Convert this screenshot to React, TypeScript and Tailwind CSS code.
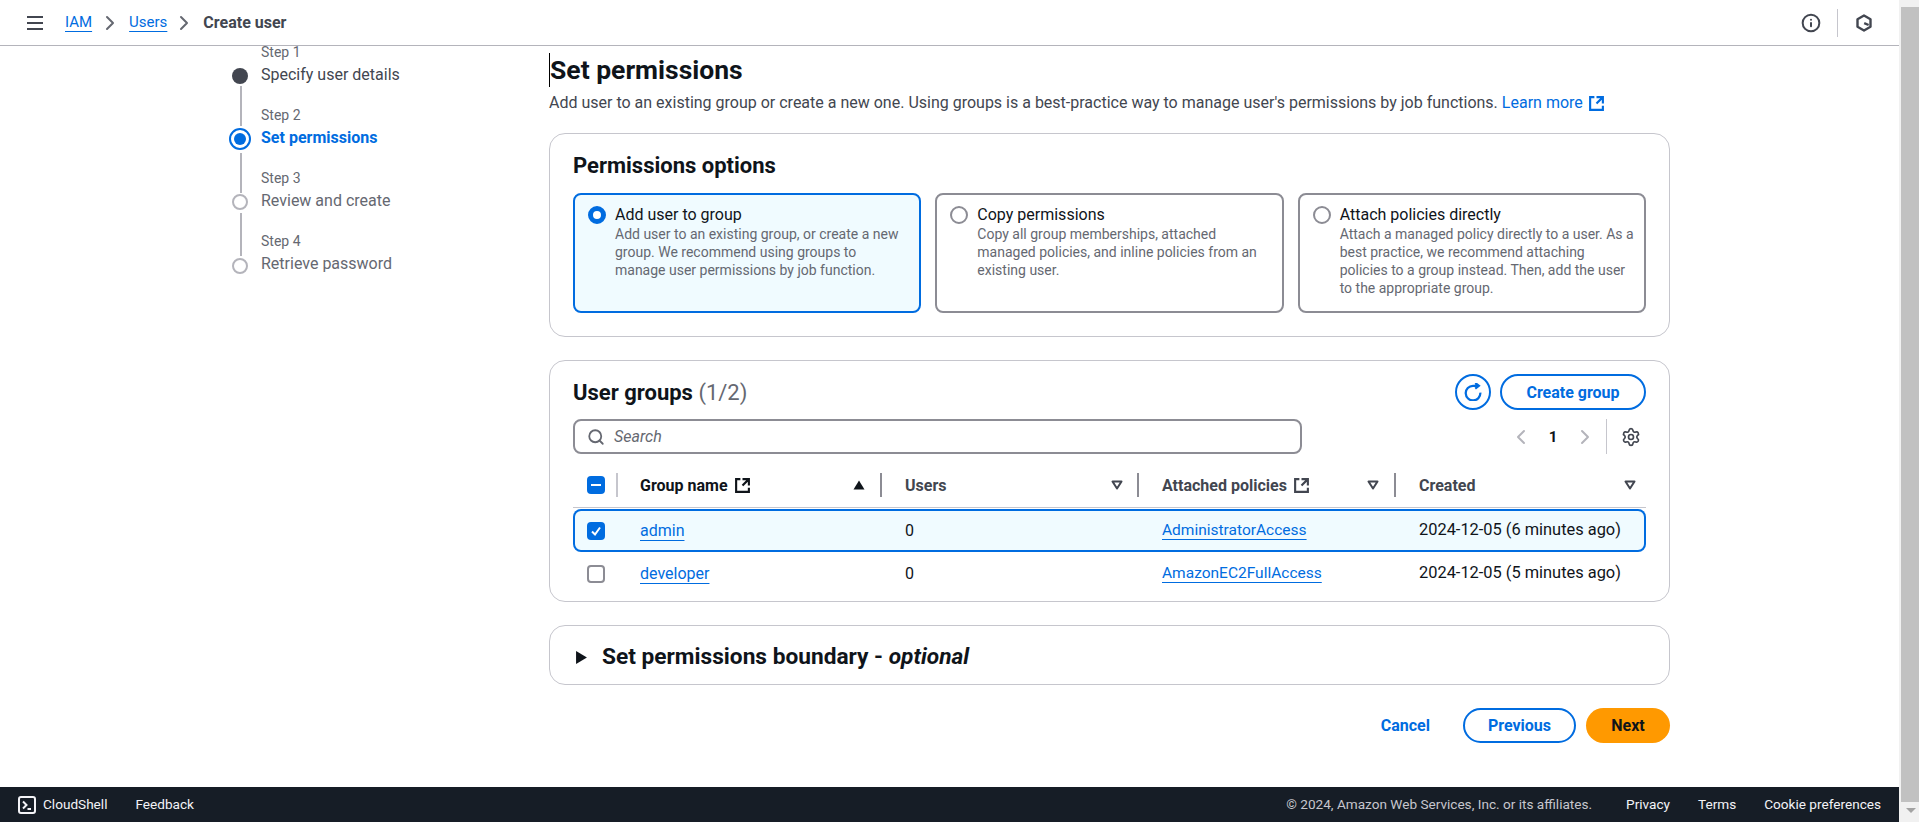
import { ChevronLeft, ChevronRight, Info, Search, Settings } from "lucide-react";

type CardProps = {
  title: string;
  description: string;
  selected?: boolean;
};

const cards: CardProps[] = [
  {
    title: "Add user to group",
    description:
      "Add user to an existing group, or create a new group. We recommend using groups to manage user permissions by job function.",
    selected: true,
  },
  {
    title: "Copy permissions",
    description:
      "Copy all group memberships, attached managed policies, and inline policies from an existing user.",
  },
  {
    title: "Attach policies directly",
    description:
      "Attach a managed policy directly to a user. As a best practice, we recommend attaching policies to a group instead. Then, add the user to the appropriate group.",
  },
];

const steps = [
  { label: "Step 1", title: "Specify user details", cls: "text-[#424650]" },
  { label: "Step 2", title: "Set permissions", cls: "font-bold text-[#006ce0]" },
  { label: "Step 3", title: "Review and create", cls: "text-[#656871]" },
  { label: "Step 4", title: "Retrieve password", cls: "text-[#656871]" },
];

const rows = [
  { name: "admin", policy: "AdministratorAccess", created: "2024-12-05 (6 minutes ago)", selected: true },
  { name: "developer", policy: "AmazonEC2FullAccess", created: "2024-12-05 (5 minutes ago)", selected: false },
];

const tableCols = "grid grid-cols-[67px_265px_257px_257px_227px]";

function ExternalIcon({ className }: { className: string }) {
  return (
    <svg viewBox="0 0 16 16" fill="none" stroke="currentColor" strokeWidth="2" className={className}>
      <path d="M14 8V2H8M14 2 8 8M6 2H2v12h12v-4" />
    </svg>
  );
}

function SortIcon({ active }: { active?: boolean }) {
  return (
    <svg viewBox="0 0 12 10" className="block h-[10px] w-[12px] text-[#424650]">
      {active ? (
        <path d="M6 0.5 11.5 9.5H0.5Z" fill="#0f141a" />
      ) : (
        <path d="M1.5 1.5h9L6 8.5Z" fill="none" stroke="currentColor" strokeWidth="2" strokeLinejoin="round" />
      )}
    </svg>
  );
}

function HeaderCell({
  label,
  external,
  active,
  divider = true,
  sortClass,
}: {
  label: string;
  external?: boolean;
  active?: boolean;
  divider?: boolean;
  sortClass: string;
}) {
  return (
    <div className="flex h-[24px] items-center pr-[23px] last:pr-[10px]">
      <span className={`pt-px text-[16px] font-bold ${active ? "text-[#0f141a]" : "text-[#424650]"}`}>{label}</span>
      {external && (
        <ExternalIcon className={`ml-[6px] h-[17px] w-[17px] ${active ? "text-[#0f141a]" : "text-[#424650]"}`} />
      )}
      <span className={`ml-auto ${sortClass}`}>
        <SortIcon active={active} />
      </span>
      {divider && <span className="h-[24px] w-[2px] bg-[#8c8c94]" />}
    </div>
  );
}

function Panel({ className, children }: { className: string; children: React.ReactNode }) {
  return <section className={`rounded-[16px] border border-[#c6c6cd] bg-white ${className}`}>{children}</section>;
}

function OptionCard({ title, description, selected }: CardProps) {
  return (
    <div
      className={`flex h-[120px] gap-[9px] rounded-lg border-2 pl-[13px] pr-[10px] pt-[10px] ${
        selected ? "border-[#006ce0] bg-[#f0fbff]" : "border-[#8c8c94] bg-white"
      }`}
    >
      {selected ? (
        <span className="mt-px h-[18px] w-[18px] shrink-0 rounded-full border-[5px] border-[#006ce0] bg-white" />
      ) : (
        <span className="mt-px h-[18px] w-[18px] shrink-0 rounded-full border-2 border-[#8c8c94] bg-white" />
      )}
      <div>
        <div className="text-[16px] leading-[20px] text-[#0f141a]">{title}</div>
        <p className="text-[14px] leading-[18px] text-[#656871]">{description}</p>
      </div>
    </div>
  );
}

function StepRail() {
  return (
    <div className="flex w-[22px] flex-col items-center pt-[22px]">
      <div className="h-[16px] w-[16px] rounded-full bg-[#424650]" />
      <div className="ml-px mt-[2px] h-[40px] w-[2px] bg-[#b4b4bb]" />
      <div className="mt-[2px] flex h-[22px] w-[22px] items-center justify-center rounded-full border-2 border-[#006ce0]">
        <div className="h-[12px] w-[12px] rounded-full bg-[#006ce0]" />
      </div>
      <div className="ml-px mt-[3px] h-[40px] w-[2px] bg-[#b4b4bb]" />
      <div className="mt-px h-[16px] w-[16px] rounded-full border-2 border-[#b4b4bb]" />
      <div className="ml-px mt-[3px] h-[43px] w-[2px] bg-[#b4b4bb]" />
      <div className="mt-[2px] h-[16px] w-[16px] rounded-full border-2 border-[#b4b4bb]" />
    </div>
  );
}

export default function App() {
  return (
    <div className="flex h-screen overflow-hidden bg-white font-['Roboto',sans-serif] text-[16px] text-[#0f141a]">
      <div className="flex min-w-0 flex-1 flex-col">
        <header className="flex h-[46px] shrink-0 items-center border-b border-[#b4b4bb] pl-[27px] pr-[26px]">
          <svg viewBox="0 0 16 14" className="h-[14px] w-[16px] text-[#424650]" fill="none" stroke="currentColor" strokeWidth="2">
            <path d="M0 1h16M0 7h16M0 13h16" />
          </svg>
          <a className="ml-[22px] text-[15px] text-[#006ce0] underline underline-offset-4">IAM</a>
          <ChevronRight className="ml-[6px] h-[24px] w-[24px] text-[#656871]" />
          <a className="ml-[7px] text-[15px] text-[#006ce0] underline underline-offset-4">Users</a>
          <ChevronRight className="ml-[5px] h-[24px] w-[24px] text-[#656871]" />
          <span className="ml-[7px] font-bold text-[#424650]">Create user</span>
          <Info className="ml-auto h-[20px] w-[20px] text-[#424650]" strokeWidth={2.4} />
          <span className="ml-[16px] mr-[17px] h-[28px] w-px bg-[#c6c6cd]" />
          <svg viewBox="0 0 18 18" className="h-[18px] w-[18px]">
            <path d="M9 1.5 15.5 5.2v7.6L9 16.5 2.5 12.8V5.2Z" fill="white" stroke="#424650" strokeWidth="2.4" strokeLinejoin="round" />
            <path d="M9.2 9.2 13.6 11" stroke="#424650" strokeWidth="2.4" />
          </svg>
        </header>

        <div className="flex min-h-0 flex-1 pl-[229px]">
          <StepRail />
          <nav className="ml-[10px] w-[288px] shrink-0">
            {steps.map((step) => (
              <div key={step.label} className="h-[63px]">
                <div className="text-[14px] leading-[12px] text-[#656871]">{step.label}</div>
                <div className={`mt-[6px] leading-[22px] ${step.cls}`}>{step.title}</div>
              </div>
            ))}
          </nav>

          <main className="w-[1121px] shrink-0">
            <h1 className="mt-[7px] border-l border-black text-[26.5px] font-bold leading-[34px] text-[#0f141a]">
              Set permissions
            </h1>
            <p className="mt-[6px] flex items-center leading-[20px] text-[#424650]">
              Add user to an existing group or create a new one. Using groups is a best-practice way to manage user's
              permissions by job functions.
              <a className="ml-[4px] text-[#006ce0]">Learn more</a>
              <ExternalIcon className="ml-[5px] h-[17px] w-[17px] text-[#006ce0]" />
            </p>

            <Panel className="mt-[20px] h-[204px] px-[23px] pt-[20px]">
              <h2 className="text-[22px] font-bold leading-[24px]">Permissions options</h2>
              <div className="mt-[15px] grid grid-cols-3 gap-[14px]">
                {cards.map((card) => (
                  <OptionCard key={card.title} {...card} />
                ))}
              </div>
            </Panel>

            <Panel className="mt-[23px] h-[242px] px-[23px] pt-[13px]">
              <div className="flex h-[36px] items-center">
                <h2 className="pt-[2px] text-[22px] font-bold leading-[24px]">
                  User groups <span className="font-normal text-[#656871]">(1/2)</span>
                </h2>
                <button className="ml-auto flex h-[36px] w-[36px] items-center justify-center rounded-full border-2 border-[#006ce0] text-[#006ce0]">
                  <svg viewBox="0 0 16 16" fill="none" stroke="currentColor" strokeWidth="2" className="h-[18px] w-[18px]">
                    <path d="M14.5 8.5a6.5 6.5 0 1 1-6.5-6h5M10 0l3.2 2.5L10 5" />
                  </svg>
                </button>
                <button className="ml-[9px] h-[36px] w-[146px] rounded-full border-2 border-[#006ce0] pt-px text-[16px] font-bold text-[#006ce0]">
                  Create group
                </button>
              </div>

              <div className="mt-[9px] flex items-center">
                <div className="flex h-[35px] w-[729px] items-center rounded-lg border-2 border-[#8c8c94] pl-[12px]">
                  <Search className="h-[18px] w-[18px] text-[#656871]" strokeWidth={2.4} />
                  <span className="ml-[9px] pt-px text-[16px] italic text-[#656871]">Search</span>
                </div>
                <ChevronLeft className="ml-[207px] mt-px h-[24px] w-[24px] text-[#b4b4bb]" />
                <span className="ml-[15px] w-[10px] pt-px text-center text-[15px] font-bold">1</span>
                <ChevronRight className="ml-[15px] mt-px h-[24px] w-[24px] text-[#b4b4bb]" />
                <span className="ml-[9px] h-[35px] w-px bg-[#c6c6cd]" />
                <Settings className="ml-[14px] mt-px h-[20px] w-[20px] text-[#424650]" />
              </div>

              <div className={`${tableCols} mt-[19px] border-b border-[#c6c6cd] pb-[10px]`}>
                <div className="flex h-[24px] items-center pl-[14px]">
                  <span className="flex h-[18px] w-[18px] items-center justify-center rounded bg-[#006ce0]">
                    <span className="h-[2px] w-[10px] bg-white" />
                  </span>
                  <span className="ml-[11px] h-[24px] w-[2px] bg-[#c6c6cd]" />
                </div>
                <HeaderCell label="Group name" external active sortClass="mr-[15px]" />
                <HeaderCell label="Users" sortClass="mr-[14px]" />
                <HeaderCell label="Attached policies" external sortClass="mr-[15px]" />
                <HeaderCell label="Created" divider={false} sortClass="" />
              </div>

              <div className="mt-px">
                {rows.map((row) => (
                  <div
                    key={row.name}
                    className={`${tableCols} h-[43px] items-center rounded-lg text-[16px] ${
                      row.selected ? "bg-[#f0fbff] ring-2 ring-inset ring-[#006ce0]" : ""
                    }`}
                  >
                    <div className="pl-[14px]">
                      {row.selected ? (
                        <span className="flex h-[18px] w-[18px] items-center justify-center rounded bg-[#006ce0]">
                          <svg viewBox="0 0 12 12" fill="none" stroke="white" strokeWidth="2" className="h-[12px] w-[12px]">
                            <path d="M2 6.5 5 9.5 10 2.5" />
                          </svg>
                        </span>
                      ) : (
                        <span className="block h-[18px] w-[18px] rounded border-2 border-[#8c8c94] bg-white" />
                      )}
                    </div>
                    <a className="justify-self-start text-[#006ce0] underline underline-offset-4">{row.name}</a>
                    <span>0</span>
                    <a className="justify-self-start text-[15.5px] text-[#006ce0] underline underline-offset-4">{row.policy}</a>
                    <span className="text-[16.4px]">{row.created}</span>
                  </div>
                ))}
              </div>
            </Panel>

            <Panel className="mt-[23px] flex h-[60px] items-center pl-[25px] pt-[4px]">
              <svg viewBox="0 0 12 12" className="h-[13px] w-[13px] text-[#0f141a]">
                <path d="M1 0 11 6 1 12Z" fill="currentColor" />
              </svg>
              <h2 className="ml-[14px] text-[22.7px] font-bold">
                Set permissions boundary - <em>optional</em>
              </h2>
            </Panel>

            <div className="mt-[23px] flex h-[35px] items-center text-[16px] font-bold">
              <a className="ml-auto text-[#006ce0]">Cancel</a>
              <button className="ml-[33px] h-[35px] w-[113px] rounded-full border-2 border-[#006ce0] text-[#006ce0]">
                Previous
              </button>
              <button className="ml-[10px] h-[35px] w-[84px] rounded-full bg-[#ff9900] text-[#0f141a]">Next</button>
            </div>
          </main>
        </div>

        <footer className="flex h-[35px] shrink-0 items-center bg-[#161d26] pl-[18px] pr-[18px] text-[13.6px] text-[#f3f3f7]">
          <svg viewBox="0 0 18 18" fill="none" stroke="currentColor" strokeWidth="2" className="h-[18px] w-[18px]">
            <rect x="1" y="1" width="16" height="16" rx="2" />
            <path d="M5 5.5 8.5 9 5 12.5M9.5 13H13" />
          </svg>
          <span className="ml-[7px]">CloudShell</span>
          <span className="ml-[28px]">Feedback</span>
          <span className="ml-auto text-[#c6c6cd]">© 2024, Amazon Web Services, Inc. or its affiliates.</span>
          <span className="ml-[34px]">Privacy</span>
          <span className="ml-[28px]">Terms</span>
          <span className="ml-[28px]">Cookie preferences</span>
        </footer>
      </div>

      {/* browser scrollbar */}
      <div className="flex w-[20px] shrink-0 flex-col bg-[#f1f1f1] pt-[7px]">
        <div className="ml-[2px] h-[795px] bg-[#c1c1c1]" />
        <div className="ml-[7px] mt-[6px] h-0 w-0 border-x-[5px] border-t-[5px] border-x-transparent border-t-[#a3a3a3]" />
      </div>
    </div>
  );
}
